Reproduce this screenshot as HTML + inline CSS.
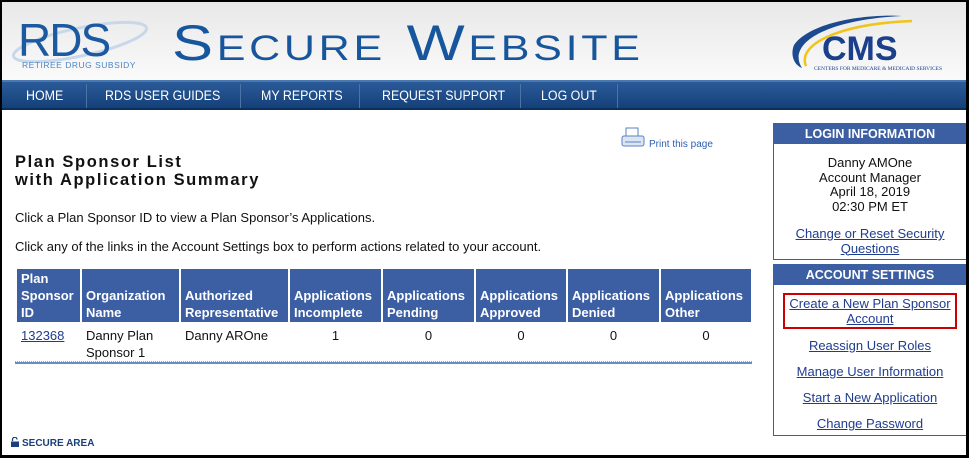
<!DOCTYPE html>
<html><head><meta charset="utf-8"><style>
*{margin:0;padding:0;box-sizing:border-box}
body{width:969px;height:458px;background:#000;position:relative;overflow:hidden;font-family:"Liberation Sans",sans-serif}
#pg{position:absolute;left:2px;top:2px;width:964px;height:453px;background:#fff;overflow:hidden}
.hdr{position:absolute;left:0;top:0;width:964px;height:78px;background:linear-gradient(#e8e8e8,#fafafa)}
.nav{position:absolute;left:0;top:78px;width:964px;height:30px;background:linear-gradient(#2a5a98,#15417a);border-top:2px solid #4a78b0;border-bottom:2px solid #0d2f5c}
.nav span{position:absolute;top:6px;color:#fff;font-size:13.5px;transform:scaleX(0.92);transform-origin:left}
.nav i{position:absolute;top:2px;width:1px;height:24px;background:#4c73a6}
.t{position:absolute;white-space:nowrap}
a{color:#1f3c8f}
table{position:absolute;left:13px;top:267px;border-collapse:separate;border-spacing:2px 0;font-size:13px}
th{background:#3c5ea2;color:#fff;text-align:left;vertical-align:bottom;padding:1px 4px 1px 4px;line-height:17px;height:54px;border-bottom:2px solid #fff}
td{vertical-align:top;padding:3px 4px;line-height:17px;color:#111}
.box{position:absolute;left:771px;width:194px;border:1px solid #3c5ea2;text-align:center;font-size:13px;color:#111}
.bh{background:#3c5ea2;color:#fff;font-weight:bold;font-size:12.5px;height:20px;line-height:20px}
</style></head><body><div id="pg">
<div class="hdr">
<svg width="200" height="70" style="position:absolute;left:8px;top:10px"><ellipse cx="70" cy="30" rx="68" ry="14" fill="none" stroke="#c8d8ea" stroke-width="3" transform="rotate(-12 70 30)"/><text x="8" y="44" font-family="Liberation Sans" font-size="46" fill="#1b5aa0" letter-spacing="-2">RDS</text><text x="12" y="56" font-family="Liberation Sans" font-size="8.5" fill="#4d86c4" letter-spacing="0.5">RETIREE DRUG SUBSIDY</text></svg>
<div class="t" style="left:170px;top:12px;font-size:50px;color:#17569c;letter-spacing:3px;font-variant:small-caps;transform:scaleX(1.23);transform-origin:left">Secure Website</div>
<svg width="170" height="66" style="position:absolute;left:780px;top:8px"><path d="M20 58 C5 35 40 10 120 6 C90 4 30 10 12 35 C8 45 12 55 20 58Z" fill="#1b4a8e"/><path d="M24 56 C15 35 55 14 130 11" fill="none" stroke="#f0c418" stroke-width="2.5"/><text x="40" y="50" font-family="Liberation Sans" font-weight="bold" font-size="34" fill="#1b3f8a">CMS</text><text x="32" y="60" font-family="Liberation Serif" font-size="5.5" fill="#1b3f8a">CENTERS FOR MEDICARE &amp; MEDICAID SERVICES</text></svg>
</div>
<div class="nav">
<span style="left:24px">HOME</span><i style="left:84px"></i>
<span style="left:103px">RDS USER GUIDES</span><i style="left:238px"></i>
<span style="left:259px">MY REPORTS</span><i style="left:357px"></i>
<span style="left:380px">REQUEST SUPPORT</span><i style="left:518px"></i>
<span style="left:539px">LOG OUT</span><i style="left:615px"></i>
</div>
<svg width="26" height="24" style="position:absolute;left:619px;top:125px"><rect x="5" y="1" width="12" height="9" fill="#fff" stroke="#5a82c0"/><rect x="1" y="9" width="22" height="10" rx="2" fill="#dbe6f5" stroke="#5a82c0"/><line x1="4" y1="15" x2="20" y2="15" stroke="#5a82c0"/></svg>
<div class="t" style="left:647px;top:137px;font-size:10px;color:#2f5fb0">Print this page</div>
<div class="t" style="left:13px;top:151px;font-size:16.5px;font-weight:bold;letter-spacing:1.6px;line-height:18px;color:#111">Plan Sponsor List<br>with Application Summary</div>
<div class="t" style="left:13px;top:208px;font-size:13px;color:#111">Click a Plan Sponsor ID to view a Plan Sponsor’s Applications.</div>
<div class="t" style="left:13px;top:237px;font-size:13px;color:#111">Click any of the links in the Account Settings box to perform actions related to your account.</div>
<table>
<tr><th style="width:63px">Plan<br>Sponsor<br>ID</th><th style="width:97px">Organization<br>Name</th><th style="width:107px">Authorized<br>Representative</th><th style="width:91px">Applications<br>Incomplete</th><th style="width:91px">Applications<br>Pending</th><th style="width:90px">Applications<br>Approved</th><th style="width:91px">Applications<br>Denied</th><th style="width:90px">Applications<br>Other</th></tr>
<tr><td><a href="#">132368</a></td><td>Danny Plan<br>Sponsor 1</td><td>Danny AROne</td><td style="text-align:center">1</td><td style="text-align:center">0</td><td style="text-align:center">0</td><td style="text-align:center">0</td><td style="text-align:center">0</td></tr>
</table>
<div style="position:absolute;left:13px;top:359px;width:737px;height:3px;border-top:1px dotted #9ab;border-bottom:2px solid #6a8cc0"></div>
<svg width="8" height="10" style="position:absolute;left:9px;top:435px"><path d="M1.5 4 V2.5 A2.2 2.2 0 0 1 6 2.5" fill="none" stroke="#1b3f7a" stroke-width="1.3"/><rect x="0" y="4.5" width="8" height="5.5" fill="#1b3f7a"/></svg>
<div class="t" style="left:20px;top:436px;font-size:10px;font-weight:bold;color:#1b3f7a">SECURE AREA</div>
<div class="box" style="top:121px;height:137px">
<div class="bh">LOGIN INFORMATION</div>
<div style="margin-top:12px;line-height:14.5px">Danny AMOne<br>Account Manager<br>April 18, 2019<br>02:30 PM ET</div>
<div style="margin-top:13px;line-height:14.5px"><a href="#">Change or Reset Security<br>Questions</a></div>
</div>
<div class="box" style="top:262px;height:172px">
<div class="bh">ACCOUNT SETTINGS</div>
<div style="margin:8px auto 0;width:174px;border:2px solid #c00;line-height:15px;padding:1px 0"><a href="#">Create a New Plan Sponsor<br>Account</a></div>
<div style="margin-top:9px"><a href="#">Reassign User Roles</a></div>
<div style="margin-top:11px"><a href="#">Manage User Information</a></div>
<div style="margin-top:11px"><a href="#">Start a New Application</a></div>
<div style="margin-top:11px"><a href="#">Change Password</a></div>
</div>
</div></body></html>
